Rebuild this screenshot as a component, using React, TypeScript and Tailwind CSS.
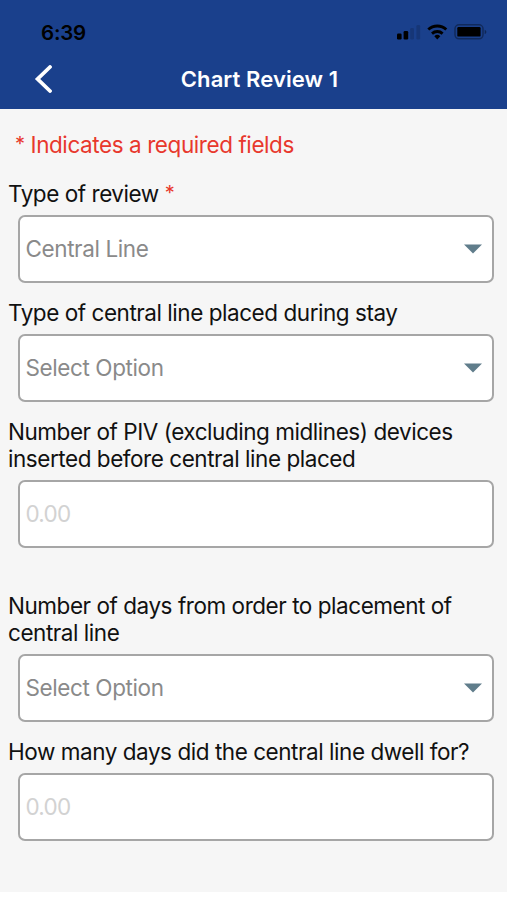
import { useState } from "react"

type FieldProps = {
  label: string
  required?: boolean
  className?: string
  children: React.ReactNode
}

const Asterisk = () => <span className="relative -top-0.5 text-[20px] leading-none text-[#e8382d]">*</span>

const Field = ({ label, required, className = "mb-4", children }: FieldProps) => {
  return (
    <div className={className}>
      <div className="mb-2 whitespace-pre-line pl-2 leading-[27px] tracking-[-0.455px] text-[#111111]">
        {label}
        {required && <> <Asterisk /></>}
      </div>
      {children}
    </div>
  )
}

const SelectBox = ({ value }: { value: string }) => {
  return (
    <button
      type="button"
      className="ml-[18px] flex h-[68px] w-[476px] items-center justify-between rounded-[7px] border-2 border-[#a6a6a6] bg-white pl-[5.5px] pr-[10px] text-left tracking-[-0.4px] text-[#8a8a8a]"
    >
      <span>{value}</span>
      <svg width="18" height="10" viewBox="0 0 18 10" fill="#607d8b">
        <path d="M0 0.5h18L9 9.5z" />
      </svg>
    </button>
  )
}

const NumberBox = () => {
  const [value, setValue] = useState("")

  return (
    <input
      value={value}
      onChange={(e) => setValue(e.target.value)}
      inputMode="decimal"
      placeholder="0.00"
      className="ml-[18px] block h-[68px] w-[476px] rounded-[7px] border-2 border-[#a6a6a6] bg-white pl-[5.5px] tracking-[-0.75px] text-[#333333] outline-none placeholder:text-[#d2d2d2]"
    />
  )
}

const StatusBar = () => {
  return (
    <div className="flex h-[49px] items-start justify-between pl-[41px] pr-[19px] pt-[18px] text-black">
      <span className="pt-px text-[20.5px] font-semibold leading-[27px] tracking-[-0.2px]">6:39</span>
      <svg width="92" height="18" viewBox="0 0 92 18" className="mt-[5px]">
        {/* Signal */}
        <rect x="1" y="10.5" width="4.6" height="6" rx="1.2" />
        <rect x="7.6" y="8" width="4.6" height="8.5" rx="1.2" />
        <rect x="14.2" y="5" width="3.8" height="11.5" rx="1.2" opacity="0.15" />
        <rect x="20.4" y="2" width="3.8" height="14.5" rx="1.2" opacity="0.15" />
        {/* Wifi */}
        <g fill="none" stroke="black" strokeWidth="2.8">
          <path d="M32.3 6.6a13 13 0 0 1 18 0" />
          <path d="M36 10.6a7.8 7.8 0 0 1 10.6 0" />
        </g>
        <path d="M38.3 13.2a4.4 4.4 0 0 1 6 0l-3 3.2z" />
        {/* Battery */}
        <rect x="59" y="1.8" width="28" height="14" rx="4" fill="none" stroke="black" strokeWidth="1.5" opacity="0.35" />
        <rect x="61.3" y="4" width="23.3" height="9.6" rx="1.2" />
        <path d="M88.7 6.7c2.2.8 2.2 3.6 0 4.4z" opacity="0.4" />
      </svg>
    </div>
  )
}

const Header = () => {
  return (
    <header className="h-[108.5px] bg-[#1a408c]">
      <StatusBar />
      <div className="grid h-[59px] grid-cols-[60px_1fr_60px] items-center text-white">
        <button type="button" aria-label="Back" className="pl-[34px]">
          <svg width="18" height="28" viewBox="0 0 18 28" fill="none" stroke="white" strokeWidth="3.8">
            <path d="M16 2L3.6 14 16 26" strokeLinecap="round" />
          </svg>
        </button>
        <h1 className="pl-[12px] pt-0.5 text-center text-[22px] font-semibold tracking-[0.1px]">Chart Review 1</h1>
      </div>
    </header>
  )
}

export default function App() {
  return (
    <div className="min-h-[900px] w-[507px] bg-white font-['Inter',sans-serif] text-[22.5px]">
      <Header />
      <main className="h-[783px] bg-[#f6f6f6] pt-[22.4px]">
        <p className="mb-[22px] pl-[15px] leading-[27px] tracking-[-0.42px] text-[#e8382d]">
          <Asterisk /> Indicates a required fields
        </p>
        <Field label="Type of review" required>
          <SelectBox value="Central Line" />
        </Field>
        <Field label="Type of central line placed during stay">
          <SelectBox value="Select Option" />
        </Field>
        <Field
          label={"Number of PIV (excluding midlines) devices\ninserted before central line placed"}
          className="mb-11"
        >
          <NumberBox />
        </Field>
        <Field label={"Number of days from order to placement of\ncentral line"}>
          <SelectBox value="Select Option" />
        </Field>
        <Field label="How many days did the central line dwell for?">
          <NumberBox />
        </Field>
      </main>
    </div>
  )
}
